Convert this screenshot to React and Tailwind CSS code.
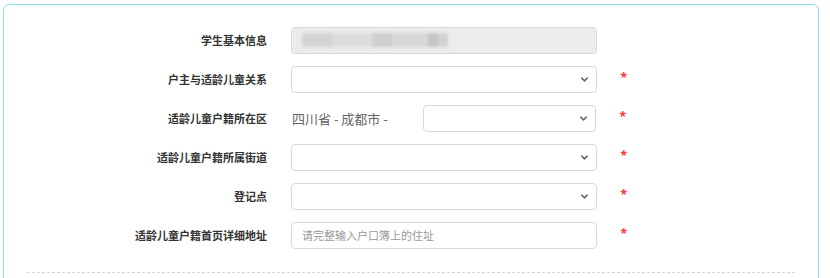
import { ChevronDown } from 'lucide-react'

const font = '"Noto Sans CJK SC", "Liberation Sans", sans-serif'

function Star() {
  return <span className="ml-[23px] mb-[4px] text-[15px] leading-none text-[#ff3b3b] font-bold">*</span>
}

function Select({ className = 'w-[306px]' }) {
  return (
    <div className={`${className} h-[27px] border border-[#d9d9d9] rounded-[4px] bg-white flex items-center justify-end pr-[6px]`}>
      <ChevronDown size={11} strokeWidth={3.2} className="text-[#666]" />
    </div>
  )
}

function Row({ label, children, required = true }) {
  return (
    <div className="flex items-center h-[27px]">
      <div className="w-[240px] text-right text-[11px] font-bold text-[#333]">{label}</div>
      <div className="ml-[24px] flex items-center">{children}</div>
      {required && <Star />}
    </div>
  )
}

export default function App() {
  return (
    <div className="w-[830px] h-[278px] bg-white overflow-hidden" style={{ fontFamily: font }}>
      <div className="ml-[3px] mt-[4px] w-[816px] h-[300px] border border-[#8fdcf2] rounded-[6px] px-[23px] pt-[22px]">
        <div className="flex flex-col gap-[12px]">
          <Row label="学生基本信息" required={false}>
            <div className="w-[306px] h-[27px] border border-[#d9d9d9] rounded-[4px] bg-[#ececec] relative overflow-hidden">
              <div className="absolute left-[10px] top-[5px] flex blur-[1.5px]">
                <div className="w-[30px] h-[14px] bg-[#d4d4d4]" />
                <div className="w-[40px] h-[14px] bg-[#dcdcdc]" />
                <div className="w-[20px] h-[14px] bg-[#cfcfcf]" />
                <div className="w-[36px] h-[14px] bg-[#d8d8d8]" />
                <div className="w-[10px] h-[14px] bg-[#c6c6c6]" />
                <div className="w-[10px] h-[14px] bg-[#d2d2d2]" />
              </div>
            </div>
          </Row>
          <Row label="户主与适龄儿童关系">
            <Select />
          </Row>
          <Row label="适龄儿童户籍所在区">
            <div className="w-[132px] text-[13px] text-[#666] pl-px">四川省 - 成都市 -</div>
            <Select className="w-[173px]" />
          </Row>
          <Row label="适龄儿童户籍所属街道">
            <Select />
          </Row>
          <Row label="登记点">
            <Select />
          </Row>
          <Row label="适龄儿童户籍首页详细地址">
            <div className="w-[306px] h-[27px] border border-[#d9d9d9] rounded-[4px] bg-white flex items-center pl-[10px] text-[11px] text-[#999]">
              请完整输入户口簿上的住址
            </div>
          </Row>
        </div>
        <div className="mt-[23px] border-t border-dashed border-[#d6d6d6]" />
      </div>
    </div>
  )
}
